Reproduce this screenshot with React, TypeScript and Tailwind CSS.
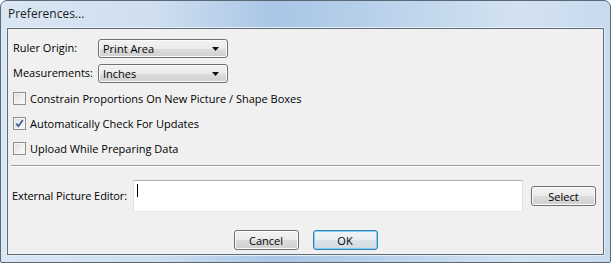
import React from "react";

function Combo({ value }: { value: string }) {
  return (
    <div className="relative w-[130px] h-[19px] rounded-[3px] border border-[#707070] bg-[linear-gradient(to_bottom,#f2f2f2_0%,#ebebeb_50%,#dddddd_50%,#cfcfcf_100%)] shadow-[inset_0_0_0_1px_#fbfbfb] flex items-center pl-[4px]">
      <span className="leading-none">{value}</span>
      <svg className="absolute right-[7px] top-[7px]" width="8" height="5" viewBox="0 0 8 5">
        <path d="M0 0 H7 L3.5 4 Z" fill="#111" />
      </svg>
    </div>
  );
}

function Check({ checked, label }: { checked?: boolean; label: string }) {
  return (
    <div className="h-[25px] flex items-center pl-[5px]">
      <div className="relative w-[13px] h-[13px] border border-[#8e8f8f] bg-[linear-gradient(135deg,#dcdcdc_0%,#f4f4f4_70%,#ffffff_100%)] shadow-[inset_0_0_0_1px_#f4f4f4]">
        {checked && (
          <svg className="absolute left-[1px] top-[1px]" width="9" height="9" viewBox="0 0 9 9">
            <path d="M1.2 4.6 L3.4 7.2 L7.8 1" fill="none" stroke="#4a5f97" strokeWidth="1.8" />
          </svg>
        )}
      </div>
      <span className="ml-[4px] leading-none">{label}</span>
    </div>
  );
}

const btn =
  "w-[65px] h-[20px] rounded-[3px] border flex items-center justify-center leading-none";

export default function App() {
  return (
    <div className="w-[611px] h-[263px] font-['Open_Sans',sans-serif] text-[11px] text-black">
      <div className="w-[611px] h-[263px] rounded-t-[7px] rounded-b-[2px] border border-[#5b6875] bg-[linear-gradient(to_right,#d9e6f3_0%,#cfdff0_25%,#a9c6e6_45%,#b7d0ea_60%,#d3e2f1_85%,#c7daee_100%)] flex flex-col px-[5px] pb-[6px]">
        <div className="h-[26px] flex items-center pl-[2px] text-[12px] text-[#1e1e1e]">
          Preferences...
        </div>
        <div className="flex-1 border border-[#e6eef4] rounded-[1px]">
          <div className="w-full h-full border border-[#5e6e7b] bg-[#f0f0f0] flex flex-col">
            <div className="pt-[10px] pl-[5px] flex items-center">
              <span className="w-[85px]">Ruler Origin:</span>
              <Combo value="Print Area" />
            </div>
            <div className="mt-[6px] pl-[5px] flex items-center">
              <span className="w-[85px]">Measurements:</span>
              <Combo value="Inches" />
            </div>
            <div className="mt-[3px]">
              <Check label="Constrain Proportions On New Picture / Shape Boxes" />
              <Check checked label="Automatically Check For Updates" />
              <Check label="Upload While Preparing Data" />
            </div>
            <div className="mt-[4px] mx-[3px] border-t border-[#a0a0a0] border-b border-b-[#ffffff]" />
            <div className="mt-[13px] pl-[4px] flex items-center">
              <span className="w-[121px] text-[11px] tracking-[-0.1px] whitespace-nowrap">External Picture Editor:</span>
              <div className="w-[390px] h-[32px] border border-[#abadb3] border-l-[#dbdfe6] border-r-[#dbdfe6] border-b-[#e3e9ef] bg-white pl-[3px] pt-[3px]">
                <div className="w-[1px] h-[13px] bg-black" />
              </div>
              <div
                className={`${btn} ml-[8px] border-[#707070] bg-[linear-gradient(to_bottom,#f2f2f2_0%,#ebebeb_50%,#dddddd_50%,#cfcfcf_100%)] shadow-[inset_0_0_0_1px_#fcfcfc]`}
              >
                Select
              </div>
            </div>
            <div className="mt-[18px] flex justify-center gap-[14px]">
              <div
                className={`${btn} border-[#707070] bg-[linear-gradient(to_bottom,#f2f2f2_0%,#ebebeb_50%,#dddddd_50%,#cfcfcf_100%)] shadow-[inset_0_0_0_1px_#fcfcfc]`}
              >
                Cancel
              </div>
              <div
                className={`${btn} border-[#3c7fb1] bg-[linear-gradient(to_bottom,#f0f4f7_0%,#e8eef2_50%,#dce4ea_50%,#d2dce3_100%)] shadow-[inset_0_0_0_1px_#7fd3f6]`}
              >
                OK
              </div>
            </div>
          </div>
        </div>
      </div>
    </div>
  );
}
